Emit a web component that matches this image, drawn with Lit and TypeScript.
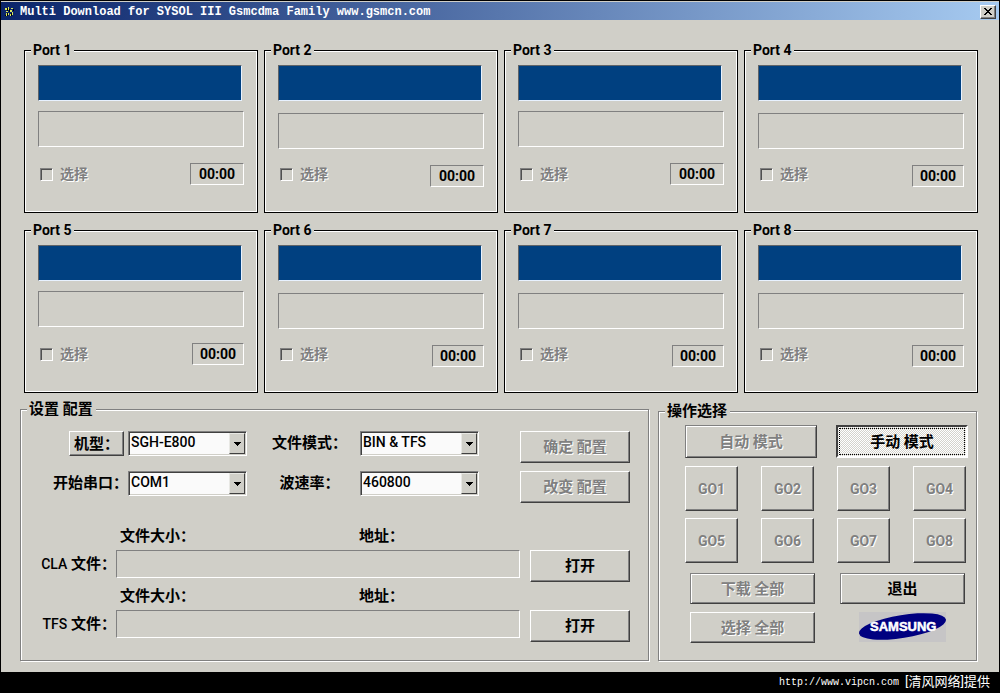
import { LitElement, html, css } from "lit";
import { customElement, property } from "lit/decorators.js";

const base = css`
  * { box-sizing: border-box; }
  fieldset { margin: 0; padding: 0; min-width: 0; }
  button, select, input { font: inherit; color: inherit; margin: 0; border-radius: 0; }
`;

interface Port { id: number; low: boolean; wide: boolean; }

const ports: Port[] = [
  { id: 1, low: false, wide: true },
  { id: 2, low: true, wide: true },
  { id: 3, low: false, wide: true },
  { id: 4, low: true, wide: false },
  { id: 5, low: false, wide: false },
  { id: 6, low: true, wide: false },
  { id: 7, low: true, wide: false },
  { id: 8, low: true, wide: false },
];

@customElement("port-panel")
export class PortPanel extends LitElement {
  @property({ type: Number }) number = 1;
  @property({ type: Boolean }) low = false;
  @property({ type: Boolean }) wide = false;

  static styles = [base, css`
    :host { display: block; min-width: 0; }
    .port {
      height: 171px;
      border: 1px solid #000;
      box-shadow: inset 0 0 0 1px #fff;
      padding: 0 13px;
    }
    .title {
      margin-left: -7px;
      padding: 0 2px;
      background: #d0cfc8;
      font-size: 14px;
      line-height: 16px;
      font-weight: 700;
    }
    .body { display: flex; flex-direction: column; padding-top: 7px; }
    .screen {
      height: 36px;
      margin-right: 2px;
      background: #004080;
      border: 1px solid;
      border-color: #606468 #e8f2ff #e8f2ff #606468;
    }
    .status {
      height: 36px;
      margin-top: 10px;
      border: 1px solid;
      border-color: #808080 #fff #fff #808080;
    }
    .low .status { margin-top: 12px; }
    .foot { display: flex; justify-content: space-between; align-items: flex-start; margin-top: 16px; }
    .low .foot { margin-top: 14px; }
    .low .time { margin-top: 2px; }
    .pick {
      display: flex;
      align-items: center;
      gap: 7px;
      padding: 0 0 0 2px;
      line-height: 22px;
      font-size: 14px;
      color: #808080;
      text-shadow: 1px 1px 0 #fff;
    }
    .box {
      appearance: none;
      width: 13px;
      height: 13px;
      border: 1px solid;
      border-color: #808080 #fff #fff #808080;
      box-shadow: inset 1px 1px 0 #505050;
      background: #d0cfc8;
    }
    .time {
      width: 52px;
      height: 22px;
      border: 1px solid;
      border-color: #808080 #fff #fff #808080;
      text-align: center;
      line-height: 20px;
      font-size: 14px;
      font-weight: 700;
    }
    .wide .time { width: 54px; }
  `];

  render() {
    return html`
      <fieldset class="port ${this.low ? "low" : ""} ${this.wide ? "wide" : ""}">
        <legend class="title">Port ${this.number}</legend>
        <div class="body">
          <div class="screen"></div>
          <div class="status"></div>
          <div class="foot">
            <label class="pick"><input class="box" type="checkbox" disabled>选择</label>
            <output class="time">00:00</output>
          </div>
        </div>
      </fieldset>`;
  }
}

@customElement("app-root")
export class AppRoot extends LitElement {
  static styles = [base, css`
    :host {
      display: block;
      min-height: 100vh;
      background: #000;
      color: #000;
      font-family: Roboto, "Noto Sans CJK SC", sans-serif;
      font-size: 15px;
      font-weight: 700;
    }
    .window {
      margin: 0;
      border: 1px solid #000;
      border-bottom: 0;
      background: #d0cfc8;
      padding-bottom: 11px;
    }
    .titlebar {
      display: flex;
      align-items: center;
      height: 19px;
      padding: 1px 3px 0 4px;
      border-top: 1px solid #d0cfc8;
      background: linear-gradient(90deg, #0a246a, #a6caf0);
    }
    .mark { flex: none; width: 9px; height: 10px; margin-right: 6px; }
    .name {
      flex: 1;
      margin: 0;
      color: #fff;
      font: 700 12px/16px "Liberation Mono", monospace;
      white-space: nowrap;
    }
    .close {
      display: grid;
      place-items: center;
      width: 16px;
      height: 14px;
      padding: 0;
      border: 1px solid;
      border-color: #fff #404040 #404040 #fff;
      box-shadow: inset -1px -1px 0 #808080;
      background: #d0cfc8;
    }
    .cross { width: 8px; height: 7px; }

    .ports {
      display: grid;
      grid-template-columns: repeat(4, minmax(0, 1fr));
      gap: 9px 6px;
      padding: 22px 21px 0 23px;
    }
    .lower {
      display: grid;
      grid-template-columns: 629fr 319fr;
      align-items: end;
      gap: 9px;
      padding: 8px 22px 0 19px;
    }
    .group {
      border: 1px solid #808080;
      box-shadow: inset 1px 1px 0 #fff, 1px 1px 0 #fff;
    }
    .caption {
      margin-left: 6px;
      padding: 0 3px 0 2px;
      background: #d0cfc8;
      font-size: 15px;
      line-height: 17px;
    }
    .settings { height: 260px; padding-right: 18px; }
    .ops { height: 258px; padding: 0 8px 0 26px; }
    .ops .caption { margin-left: -20px; }

    .btn {
      display: block;
      padding: 0;
      border: 1px solid;
      border-color: #fff #404040 #404040 #fff;
      box-shadow: inset -1px -1px 0 #808080;
      background: #d0cfc8;
      font-size: 15px;
      line-height: 20px;
      text-align: center;
      white-space: nowrap;
    }
    .btn:disabled { color: #808080; text-shadow: 1px 1px 0 #fff; }
    .btn.framed { border-color: #808080 #404040 #404040 #808080; box-shadow: inset 1px 1px 0 #fff, inset -1px -1px 0 #808080; }
    .btn.pressed {
      border: 2px solid;
      border-color: #404040 #fff #fff #404040;
      box-shadow: none;
      background: repeating-conic-gradient(#fff 0 25%, #d4d3cc 0 50%) 0 0 / 2px 2px;
      outline: 1px dotted #000;
      outline-offset: -4px;
    }

    .form {
      display: grid;
      grid-template-columns: 107px 119fr 113fr 119fr 41fr 110fr;
      row-gap: 8px;
      padding-top: 13px;
      align-items: start;
    }
    .tag { justify-self: end; line-height: 24px; white-space: nowrap; }
    .model { width: 55px; height: 25px; margin-right: 4px; }
    .tag.mid { justify-self: center; padding-left: 12px; }
    .apply { grid-column: 6; height: 32px; }

    .combo { position: relative; height: 25px; }
    .choice {
      appearance: none;
      width: 100%;
      height: 25px;
      padding: 0 18px 4px 2px;
      border: 1px solid;
      border-color: #808080 #fff #fff #808080;
      box-shadow: inset 1px 1px 0 #404040, inset -1px -1px 0 #d0cfc8;
      background: #fafafa;
      font-size: 14px;
      font-weight: 500;
      line-height: 20px;
    }
    .drop {
      position: absolute;
      top: 2px;
      right: 2px;
      bottom: 2px;
      display: grid;
      place-items: center;
      width: 16px;
      border: 1px solid;
      border-color: #e8e8e4 #404040 #404040 #e8e8e4;
      background: #d0cfc8;
      pointer-events: none;
    }
    .arrow { width: 7px; height: 4px; }

    .files { padding-top: 25px; display: grid; gap: 6px; }
    .file {
      display: grid;
      grid-template-columns: 95px minmax(0, 1fr) 100px;
      row-gap: 6px;
    }
    .meta {
      grid-column: 2;
      display: grid;
      grid-template-columns: 243fr 161fr;
      line-height: 16px;
      padding-right: 10px;
    }
    .size { padding-left: 4px; }
    .kind {
      grid-column: 1;
      justify-self: end;
      line-height: 28px;
      white-space: nowrap;
    }
    .latin { font-size: 14px; font-weight: 500; }
    .path {
      width: auto;
      min-width: 0;
      height: 28px;
      margin-right: 10px;
      padding: 0 4px;
      border: 1px solid;
      border-color: #808080 #fff #fff #808080;
      background: transparent;
    }
    .open { height: 32px; }

    .modes { display: grid; grid-template-columns: 1fr 1fr; gap: 19px; padding-top: 5px; }
    .mode { height: 33px; }
    .gos { display: grid; grid-template-columns: repeat(4, 1fr); gap: 7px 23px; padding: 8px 2px 0 0; }
    .go { height: 45px; font-size: 14px; }
    .bulk { display: grid; grid-template-columns: 1fr 1fr; gap: 8px 25px; padding: 10px 3px 0 5px; }
    .act { height: 31px; }
    .logo { justify-self: center; width: 87px; height: 30px; }
    .brand { font: 700 13px "Liberation Sans", sans-serif; fill: #fff; stroke: #fff; stroke-width: 0.5px; }

    .credit {
      display: flex;
      justify-content: flex-end;
      align-items: center;
      gap: 6px;
      height: 20px;
      padding-right: 10px;
      color: #fff;
      font-size: 13px;
      line-height: 16px;
      font-weight: 400;
    }
    .site { color: inherit; text-decoration: none; font: 400 10px "Liberation Mono", monospace; }
  `];

  private combo(id: string, value: string) {
    return html`
      <div class="combo">
        <select class="choice" id=${id}><option>${value}</option></select>
        <span class="drop"><svg class="arrow" viewBox="0 0 7 4" shape-rendering="crispEdges"><path d="M0 0h7v1h-1v1h-1v1h-1v1h-1v-1h-1v-1h-1v-1h-1z"/></svg></span>
      </div>`;
  }

  private file(kind: string) {
    const id = kind.toLowerCase();
    return html`
      <div class="file">
        <div class="meta"><span class="size">文件大小：</span><span>地址：</span></div>
        <label class="kind" for=${id}><span class="latin">${kind}</span> 文件：</label>
        <input class="path" id=${id} type="text" readonly>
        <button class="btn open">打开</button>
      </div>`;
  }

  render() {
    return html`
      <main class="window">
        <header class="titlebar">
          <svg class="mark" viewBox="0 0 9 10" shape-rendering="crispEdges">
            <path fill="#d8e860" d="M0 1h2v2h-2zM3 0h1v3h-1zM6 1h2v1h-2zM1 4h2v1h-2zM5 3h2v2h-2zM1 6h1v3h-1zM3 6h1v2h-1zM5 7h1v2h-1zM7 5h1v3h-1z"/>
            <path fill="#000" d="M2 1h1v3h-1zM4 2h1v3h-1zM2 6h1v3h-1zM6 6h1v3h-1zM0 8h1v1h-1zM8 2h1v2h-1z"/>
          </svg>
          <h1 class="name">Multi Download for SYSOL III Gsmcdma Family www.gsmcn.com</h1>
          <button class="close" aria-label="Close">
            <svg class="cross" viewBox="0 0 8 7" shape-rendering="crispEdges"><path d="M0 0h2v1h1v1h2v-1h1v-1h2v1h-1v1h-1v1h-1v1h1v1h1v1h1v1h-2v-1h-1v-1h-2v1h-1v1h-2v-1h1v-1h1v-1h1v-1h-1v-1h-1v-1h-1z"/></svg>
          </button>
        </header>

        <section class="ports">
          ${ports.map((p) => html`<port-panel .number=${p.id} .low=${p.low} .wide=${p.wide}></port-panel>`)}
        </section>

        <section class="lower">
          <fieldset class="group settings">
            <legend class="caption">设置 配置</legend>
            <div class="form">
              <button class="btn tag model">机型：</button>
              ${this.combo("model", "SGH-E800")}
              <label class="tag mid" for="mode">文件模式：</label>
              ${this.combo("mode", "BIN & TFS")}
              <button class="btn apply" disabled>确定 配置</button>
              <label class="tag" for="com">开始串口：</label>
              ${this.combo("com", "COM1")}
              <label class="tag mid" for="baud">波速率：</label>
              ${this.combo("baud", "460800")}
              <button class="btn apply" disabled>改变 配置</button>
            </div>
            <div class="files">${this.file("CLA")}${this.file("TFS")}</div>
          </fieldset>

          <fieldset class="group ops">
            <legend class="caption">操作选择</legend>
            <div class="modes">
              <button class="btn mode framed" disabled>自动 模式</button>
              <button class="btn mode pressed">手动 模式</button>
            </div>
            <div class="gos">
              ${[1, 2, 3, 4, 5, 6, 7, 8].map((n) => html`<button class="btn go" disabled>GO${n}</button>`)}
            </div>
            <div class="bulk">
              <button class="btn act framed" disabled>下载 全部</button>
              <button class="btn act framed">退出</button>
              <button class="btn act" disabled>选择 全部</button>
              <svg class="logo" viewBox="0 0 87 30" role="img" aria-label="Samsung">
                <rect width="87" height="30" fill="#c6c5c6"/>
                <ellipse cx="43.5" cy="14.5" rx="44" ry="11.5" transform="rotate(-9 43.5 14.5)" fill="#000080"/>
                <text class="brand" x="11" y="19">SAMSUNG</text>
              </svg>
            </div>
          </fieldset>
        </section>
      </main>
      <footer class="credit"><a class="site" href="http://www.vipcn.com">http://www.vipcn.com</a><span>[清风网络]提供</span></footer>`;
  }
}
